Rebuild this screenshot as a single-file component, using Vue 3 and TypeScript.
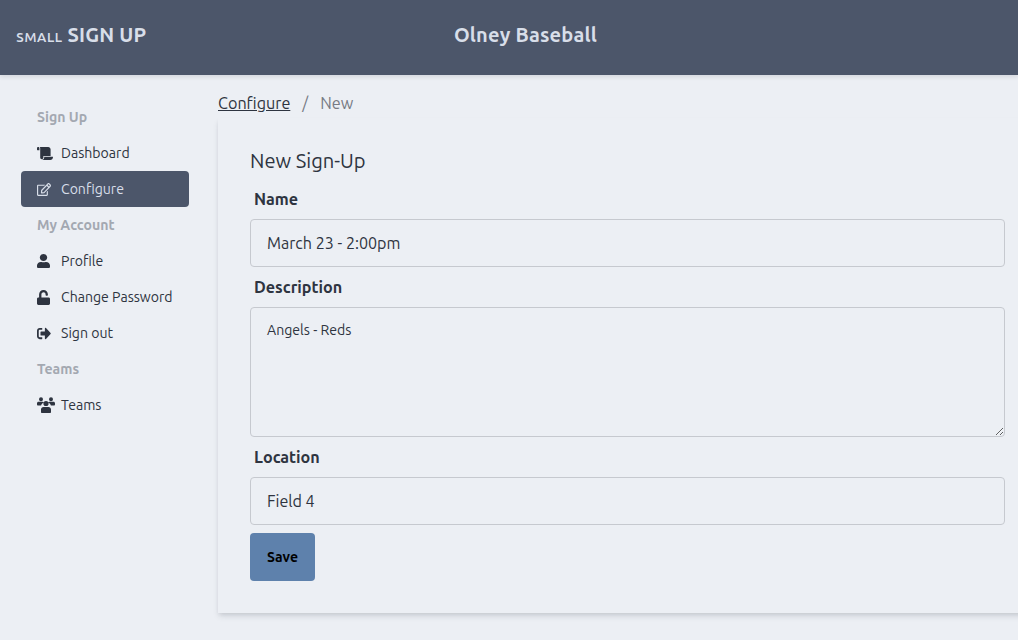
<script setup lang="ts">
import { ref } from 'vue'

type Icon = { box: string; w: number; h: number; d: string }
type NavItem = { label: string; icon: Icon; active?: boolean }
type NavGroup = { title: string; items: NavItem[] }

const scroll: Icon = {
  box: '0 0 640 512',
  w: 16,
  h: 13,
  d: 'M48 0C21.53 0 0 21.53 0 48v64c0 8.84 7.16 16 16 16h80V48C96 21.53 74.47 0 48 0zm208 412.57V352h288V96c0-52.94-43.06-96-96-96H111.59C121.74 13.41 128 29.92 128 48v368c0 38.87 34.66 69.65 74.75 63.12C234.22 474 256 444.46 256 412.57zM288 384v32c0 52.93-43.06 96-96 96h336c61.86 0 112-50.14 112-112 0-8.84-7.16-16-16-16H288z',
}
const edit: Icon = {
  box: '0 0 576 512',
  w: 14,
  h: 13,
  d: 'M402.3 344.9l32-32c5-5 13.7-1.5 13.7 5.7V464c0 26.5-21.5 48-48 48H48c-26.5 0-48-21.5-48-48V112c0-26.5 21.5-48 48-48h273.5c7.1 0 10.7 8.6 5.7 13.7l-32 32c-1.5 1.5-3.5 2.3-5.7 2.3H48v352h352V350.5c0-2.1.8-4.1 2.3-5.6zm156.6-201.8L296.3 405.7l-90.4 10c-26.2 2.9-48.5-19.2-45.6-45.6l10-90.4L432.9 17.1c22.9-22.9 59.9-22.9 82.7 0l43.2 43.2c22.9 22.9 22.9 60 .1 82.8zM460.1 174L402 115.9 216.2 301.8l-7.3 65.3 65.3-7.3L460.1 174zm64.8-79.7l-43.2-43.2c-4.1-4.1-10.8-4.1-14.8 0L436 82l58.1 58.1 30.9-30.9c4-4.2 4-10.8-.1-14.9z',
}
const user: Icon = {
  box: '0 0 448 512',
  w: 13,
  h: 14,
  d: 'M224 256c70.7 0 128-57.3 128-128S294.7 0 224 0 96 57.3 96 128s57.3 128 128 128zm89.6 32h-16.7c-22.2 10.2-46.9 16-72.9 16s-50.6-5.8-72.9-16h-16.7C60.2 288 0 348.2 0 422.4V464c0 26.5 21.5 48 48 48h352c26.5 0 48-21.5 48-48v-41.6c0-74.2-60.2-134.4-134.4-134.4z',
}
const unlock: Icon = {
  box: '0 0 448 512',
  w: 13,
  h: 15,
  d: 'M400 256H152V152.9c0-39.6 31.7-72.5 71.3-72.9 40-.4 72.7 32.1 72.7 72v16c0 13.3 10.7 24 24 24h32c13.3 0 24-10.7 24-24v-16C376 68 307.5-.3 223.5 0 139.5.3 72 69.5 72 153.5V256H48c-26.5 0-48 21.5-48 48v160c0 26.5 21.5 48 48 48h352c26.5 0 48-21.5 48-48V304c0-26.5-21.5-48-48-48z',
}
const signOut: Icon = {
  box: '0 0 512 512',
  w: 14,
  h: 15,
  d: 'M497 273L329 441c-15 15-41 4.5-41-17v-96H152c-13.3 0-24-10.7-24-24v-96c0-13.3 10.7-24 24-24h136V88c0-21.4 25.9-32 41-17l168 168c9.3 9.4 9.3 24.6 0 34zM192 436v-40c0-6.6-5.4-12-12-12H96c-17.7 0-32-14.3-32-32V160c0-17.7 14.3-32 32-32h84c6.6 0 12-5.4 12-12V76c0-6.6-5.4-12-12-12H96c-53 0-96 43-96 96v192c0 53 43 96 96 96h84c6.6 0 12-5.4 12-12z',
}
const users: Icon = {
  box: '0 0 18 16',
  w: 18,
  h: 16,
  d: 'M4 .2a2 2 0 1 0 0 4a2 2 0 1 0 0-4zM14 .2a2 2 0 1 0 0 4a2 2 0 1 0 0-4zM9 3.9a2.6 2.6 0 1 0 0 5.2a2.6 2.6 0 1 0 0-5.2zM1.5 4.8h4c.6 0 1 .2 1.3.6-1.3.7-2.3 1.6-2.7 3H.8C.3 8.4 0 8 0 7.5V6.3c0-.8.7-1.5 1.5-1.5zM16.5 4.8h-4c-.6 0-1 .2-1.3.6 1.3.7 2.3 1.6 2.7 3h3.3c.5 0 .8-.4.8-.9V6.3c0-.8-.7-1.5-1.5-1.5zM6.5 10h5c1.4 0 2.5 1.1 2.5 2.5V15c0 .6-.4 1-1 1H5c-.6 0-1-.4-1-1v-2.5C4 11.1 5.1 10 6.5 10z',
}

const nav: NavGroup[] = [
  {
    title: 'Sign Up',
    items: [
      { label: 'Dashboard', icon: scroll },
      { label: 'Configure', icon: edit, active: true },
    ],
  },
  {
    title: 'My Account',
    items: [
      { label: 'Profile', icon: user },
      { label: 'Change Password', icon: unlock },
      { label: 'Sign out', icon: signOut },
    ],
  },
  {
    title: 'Teams',
    items: [{ label: 'Teams', icon: users }],
  },
]

const name = ref('March 23 - 2:00pm')
const description = ref('Angels - Reds')
const location = ref('Field 4')
</script>

<template>
  <div class="page">
    <header class="topbar">
      <div class="brand"><span class="brand-small">small</span> SIGN UP</div>
      <div class="org">Olney Baseball</div>
    </header>

    <div class="body">
      <aside class="sidebar">
        <template v-for="group in nav" :key="group.title">
          <p class="menu-label">{{ group.title }}</p>
          <ul class="menu-list">
            <li v-for="item in group.items" :key="item.label">
              <a href="#" class="menu-link" :class="{ active: item.active }">
                <span class="menu-icon">
                  <svg :viewBox="item.icon.box" :width="item.icon.w" :height="item.icon.h" preserveAspectRatio="none" fill="currentColor"><path :d="item.icon.d" /></svg>
                </span>
                {{ item.label }}
              </a>
            </li>
          </ul>
        </template>
      </aside>

      <main class="main">
        <nav class="crumbs">
          <a href="#" class="crumb-link">Configure</a>
          <span class="crumb-sep">/</span>
          <span class="crumb-current">New</span>
        </nav>

        <section class="card">
          <h2 class="card-title">New Sign-Up</h2>
          <form class="form" @submit.prevent>
            <label class="label" for="su-name">Name</label>
            <input id="su-name" v-model="name" class="input" type="text" />
            <label class="label" for="su-desc">Description</label>
            <textarea id="su-desc" v-model="description" class="input textarea"></textarea>
            <label class="label" for="su-loc">Location</label>
            <input id="su-loc" v-model="location" class="input" type="text" />
            <button class="save" type="submit">Save</button>
          </form>
        </section>
      </main>
    </div>
  </div>
</template>

<style>
html, body {
  margin: 0;
  background: #eceff4;
}
</style>

<style scoped>
.page {
  width: 1018px;
  height: 640px;
  overflow: hidden;
  background: #eceff4;
  color: #2e3440;
  font-family: Ubuntu, "Noto Sans", sans-serif;
}

.topbar {
  height: 75px;
  box-sizing: border-box;
  padding-bottom: 5px;
  display: flex;
  align-items: center;
  background: #4c566a;
  color: #d8dee9;
  font-weight: 700;
  font-size: 20px;
  line-height: 24px;
  letter-spacing: 0.2px;
  box-shadow: 0 2px 4px rgba(46, 52, 64, 0.12);
  position: relative;
}
.brand {
  width: 202px;
  padding-left: 16px;
  white-space: nowrap;
}
.brand-small {
  font-weight: 500;
  font-variant: small-caps;
  font-size: 16px;
}
.org {
  flex: 1;
  padding-right: 185px;
  text-align: center;
}

.body {
  display: grid;
  grid-template-columns: 218px 819px;
}

.sidebar {
  padding: 24px 29px 0 21px;
  font-size: 14.1px;
}
.menu-label {
  margin: 0;
  height: 36px;
  padding-left: 16px;
  line-height: 36px;
  font-weight: 700;
  color: #a3a8b1;
}
.menu-list {
  margin: 0;
  padding: 0;
  list-style: none;
}
.menu-link {
  display: flex;
  align-items: center;
  height: 36px;
  padding-left: 16px;
  border-radius: 4px;
  color: #2e3440;
  text-decoration: none;
}
.menu-link.active {
  background: #4c566a;
  color: #d8dee9;
}
.menu-icon {
  display: flex;
  width: 24px;
  flex: none;
}

.main {
  display: flex;
  flex-direction: column;
}
.crumbs {
  height: 43px;
  display: flex;
  align-items: flex-start;
  padding-top: 16px;
  box-sizing: border-box;
  font-size: 16.2px;
  line-height: 24px;
  color: #777b84;
}
.crumb-link {
  color: #2e3440;
}
.crumb-sep {
  padding: 0 12px;
}

.card {
  padding: 34px 32px 32px;
  box-shadow: 0 4px 6px -1px rgba(46, 52, 64, 0.15), 0 2px 4px -1px rgba(46, 52, 64, 0.08);
}
.card-title {
  margin: 0 0 9px;
  font-size: 20.15px;
  line-height: 18px;
  font-weight: 400;
}
.form {
  display: flex;
  flex-direction: column;
}
.label {
  height: 40px;
  padding: 8px 4px 0;
  box-sizing: border-box;
  font-size: 16.2px;
  line-height: 24px;
  font-weight: 700;
}
.input {
  display: block;
  width: 100%;
  height: 48px;
  box-sizing: border-box;
  padding: 12px 16px;
  background: #eceff4;
  border: 1px solid #c6c9cf;
  border-radius: 4px;
  color: #2e3440;
  font-family: inherit;
  font-size: 16.1px;
  line-height: 24px;
  outline: none;
}
.textarea {
  height: 130px;
  font-size: 14.1px;
  line-height: 20px;
}
.save {
  align-self: flex-start;
  width: 65px;
  height: 48px;
  margin-top: 8px;
  padding: 0;
  border: none;
  border-radius: 4px;
  background: #5e81ac;
  color: #000;
  font-family: inherit;
  font-size: 14px;
  font-weight: 700;
}
</style>
